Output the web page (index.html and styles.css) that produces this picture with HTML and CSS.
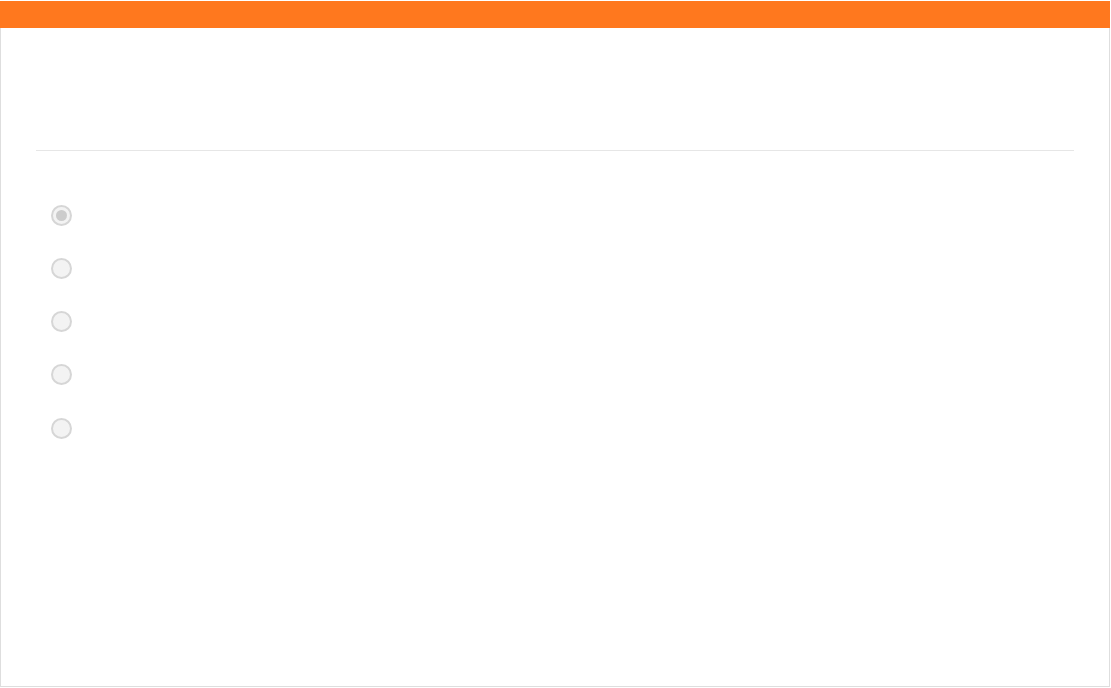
FILE: index.html
```html
<!DOCTYPE html>
<html>
<head>
  <title>Question</title>
  <link rel="stylesheet" href="styles.css">
</head>
<body>
  <div class="card">
    <div class="card-head"></div>
    <div class="card-body">
      <div class="question-title"></div>
      <div class="options">
        <label class="option"><span class="radio checked"></span></label>
        <label class="option"><span class="radio"></span></label>
        <label class="option"><span class="radio"></span></label>
        <label class="option"><span class="radio"></span></label>
        <label class="option"><span class="radio"></span></label>
      </div>
    </div>
  </div>
</body>
</html>
```

FILE: styles.css
```css
body {
  margin: 0;
  font-family: "Liberation Sans", Arial, sans-serif;
  background: #fff;
}
.card {
  box-sizing: border-box;
  width: 1110px;
  height: 687px;
  border: 1px solid #dedede;
  border-top: none;
  background: #fff;
}
.card-head {
  height: 28px;
  margin: 0 -1px;
  border-top: 1px solid #fff;
  box-sizing: border-box;
  background: #ff781e;
}
.card-body {
  padding: 0 35px;
}
.question-title {
  height: 122px;
  border-bottom: 1px solid #e6e6e6;
}
.options {
  display: flex;
  flex-direction: column;
  gap: 32.25px;
  padding: 53.5px 0 0 15px;
}
.option {
  display: flex;
  align-items: center;
  height: 21px;
}
.radio {
  box-sizing: border-box;
  width: 21px;
  height: 21px;
  border: 2px solid #d6d6d6;
  border-radius: 50%;
  background: #f3f3f3;
  display: flex;
  align-items: center;
  justify-content: center;
}
.radio.checked::after {
  content: "";
  width: 11px;
  height: 11px;
  border-radius: 50%;
  background: #cccccc;
}
```
